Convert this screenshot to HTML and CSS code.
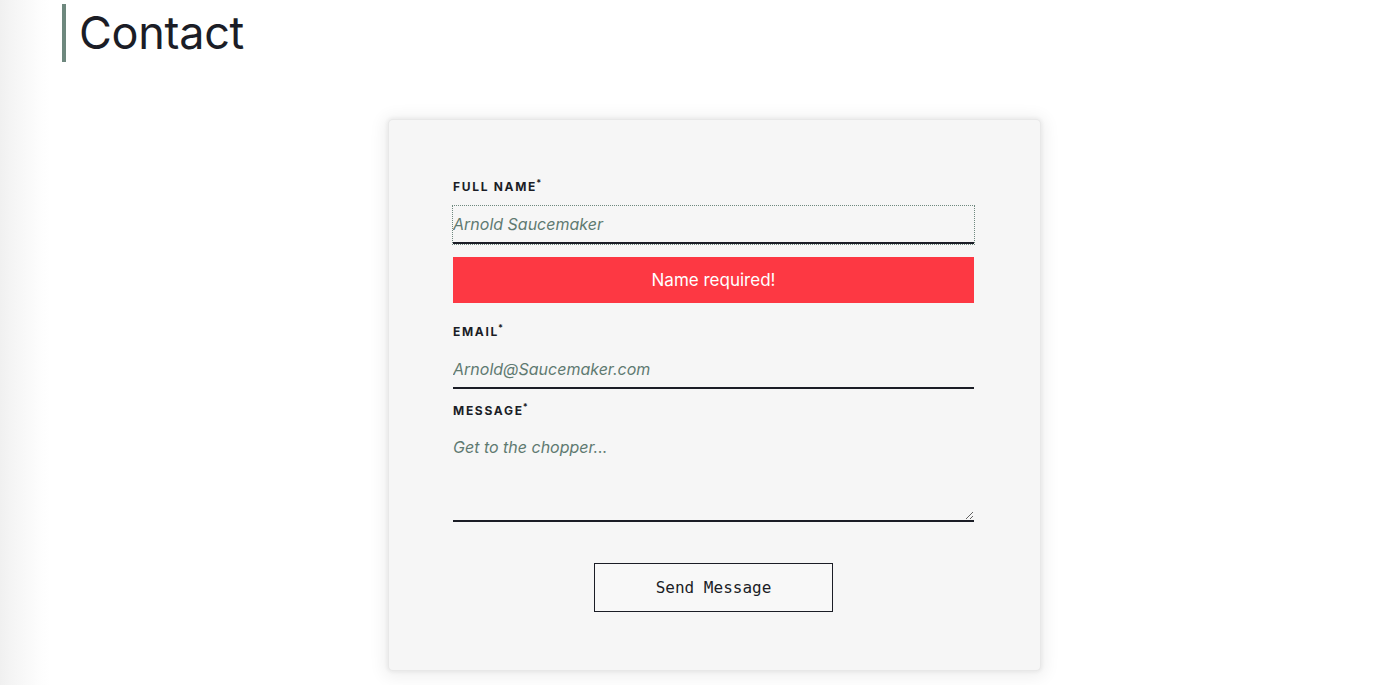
FILE: index.html
```
<!DOCTYPE html>
<html lang="en">
<head>
<meta charset="utf-8">
<title>Contact</title>
<link rel="stylesheet" href="styles.css">
</head>
<body>
<header class="page-head">
  <h1 class="title">Contact</h1>
</header>
<main class="main">
  <form class="card" novalidate>
    <label class="label" for="name">Full Name<sup class="req">*</sup></label>
    <input class="field field-focus" id="name" type="text" placeholder="Arnold Saucemaker">
    <div class="error">Name required!</div>
    <label class="label label-email" for="email">Email<sup class="req">*</sup></label>
    <input class="field" id="email" type="email" placeholder="Arnold@Saucemaker.com">
    <label class="label label-msg" for="msg">Message<sup class="req">*</sup></label>
    <textarea class="field area" id="msg" placeholder="Get to the chopper..."></textarea>
    <div class="actions">
      <button class="send" type="button">Send Message</button>
    </div>
  </form>
</main>
</body>
</html>
```
FILE: styles.css
```
html, body {
  margin: 0;
  padding: 0;
}
body {
  background: linear-gradient(to right, #f0f0f0 0, #f4f4f4 10px, #f7f7f7 20px, #fafafa 30px, #fdfdfd 40px, #ffffff 50px);
  font-family: Inter, "Noto Sans", sans-serif;
  color: #1b1d26;
  height: 685px;
  overflow: hidden;
}
.page-head {
  padding: 4px 0 0 62px;
}
.title {
  margin: 0;
  border-left: 4px solid #6e887e;
  padding-left: 13px;
  font-size: 45px;
  font-weight: 400;
  line-height: 58px;
  letter-spacing: -0.3px;
  color: #1b1d26;
}
.main {
  padding: 58px 33px 0 62px;
  display: flex;
  justify-content: center;
}
.card {
  width: 521px;
  padding: 59px 66px 58px 64px;
  background: #f6f6f6;
  border-radius: 4px;
  box-shadow: 0 0 0 1px #e8e8e8, 0 0 3px 3px rgba(0, 0, 0, 0.04), 0 2px 16px 6px rgba(0, 0, 0, 0.06);
  display: flex;
  flex-direction: column;
}
.label {
  display: block;
  font-size: 12px;
  font-weight: 700;
  letter-spacing: 1.7px;
  text-transform: uppercase;
  line-height: 16px;
  color: #1b1d26;
}
.req {
  font-size: 9px;
  vertical-align: top;
  line-height: 8px;
  letter-spacing: 0;
  margin-left: -1px;
}
.field {
  margin-top: 11px;
  height: 38px;
  box-sizing: border-box;
  padding: 0;
  border: none;
  border-bottom: 2px solid #1b1d26;
  background: transparent;
  font-family: Inter, "Noto Sans", sans-serif;
  font-size: 16px;
  color: #1b1d26;
  outline: none;
}
.field::placeholder {
  color: #5f7a71;
  font-style: italic;
  opacity: 1;
}
.field-focus {
  outline: 1px dotted #6e887e;
  outline-offset: 0;
}
.error {
  margin-top: 13px;
  height: 46px;
  background: #fd3843;
  color: #ffffff;
  font-size: 17px;
  display: flex;
  align-items: center;
  justify-content: center;
}
.label-email {
  margin-top: 21px;
}
.label-msg {
  margin-top: 14px;
}
.area {
  margin-top: 12px;
  height: 91px;
  padding-top: 6px;
  line-height: 20px;
  resize: vertical;
}
.actions {
  margin-top: 41px;
  display: flex;
  justify-content: center;
}
.send {
  width: 239px;
  height: 49px;
  border: 1px solid #1b1d26;
  background: #f8f8f8;
  font-family: "DejaVu Sans Mono", "Liberation Mono", monospace;
  font-size: 16px;
  color: #1b1d26;
  border-radius: 0;
  cursor: pointer;
}
```
